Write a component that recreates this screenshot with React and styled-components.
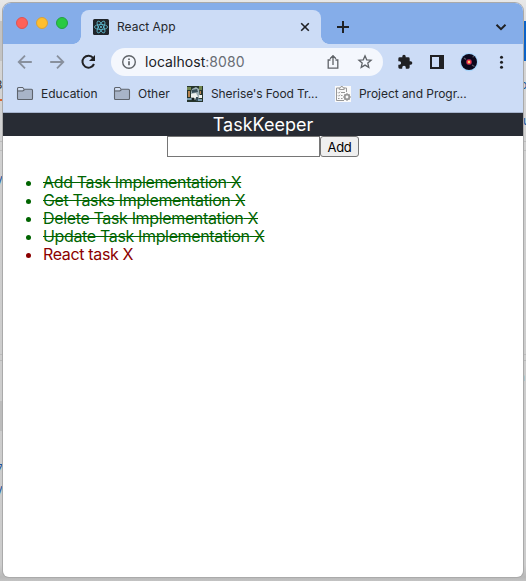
import React from "react";
import styled, { createGlobalStyle } from "styled-components";

const GlobalStyle = createGlobalStyle`
  * { box-sizing: border-box; }
  body { margin: 0; overflow: hidden; font-family: Inter, "Liberation Sans", sans-serif; }
`;

const Desktop = styled.main`
  position: relative;
  width: 526px;
  height: 581px;
  padding: 3px 3px 4px;
  overflow: hidden;
  background:
    linear-gradient(#bcbcbc, #bcbcbc) 0 354px / 100% 1px no-repeat,
    linear-gradient(#b8b8b8, #b8b8b8) 0 360px / 100% 1px no-repeat,
    linear-gradient(#bdbdbd, #bdbdbd) 0 141px / 100% 1px no-repeat,
    linear-gradient(#bdbdbd, #bdbdbd) 0 150px / 100% 1px no-repeat,
    linear-gradient(#d9632f, #d9632f) 0 99px / 3px 2px no-repeat,
    linear-gradient(#0b62c7, #0b62c7) 523px 21px / 3px 40px no-repeat,
    linear-gradient(#bcbcbc, #bcbcbc) 0 401px / 3px 30px no-repeat,
    linear-gradient(#c3c3c3, #c3c3c3) 0 21px / 3px 40px no-repeat,
    linear-gradient(#e8e8e8 0, #dedede 20px, #d5d5d5 62px, #cecece 200px, #cccccc 565px, #b9b9b9 577px, #c3c3c3);
`;

const Fragment = styled.span`
  position: absolute;
  left: ${(p) => p.$x}px;
  top: ${(p) => p.$y}px;
  color: ${(p) => p.$color || "#1859a0"};
  font-size: 12px;
  line-height: 14px;
`;

const Window = styled.section`
  position: relative;
  display: flex;
  flex-direction: column;
  height: 574px;
  overflow: hidden;
  border-radius: 8px 8px 6px 6px;
  background: #fff;
  box-shadow: 0 0 0 1px #aaa;
`;

const TabStrip = styled.header`
  display: flex;
  height: 41px;
  flex: none;
  background: #85ade9;
`;

const Lights = styled.div`
  display: flex;
  gap: 8px;
  width: 78px;
  padding: 14px 0 0 13px;
`;

const Light = styled.i`
  width: 12px;
  height: 12px;
  border-radius: 50%;
  background: ${(p) => p.$color};
  border: 1px solid ${(p) => p.$edge};
`;

const Tab = styled.div`
  position: relative;
  display: flex;
  align-items: center;
  width: 240px;
  height: 34px;
  margin-top: 7px;
  padding: 0 11px 0 12px;
  border-radius: 8px 8px 0 0;
  background: #ccdcf6;
  &::before, &::after {
    content: "";
    position: absolute;
    bottom: 0;
    width: 8px;
    height: 8px;
  }
  &::before { left: -8px; background: radial-gradient(circle at 0 0, transparent 7.5px, #ccdcf6 8px); }
  &::after { right: -8px; background: radial-gradient(circle at 100% 0, transparent 7.5px, #ccdcf6 8px); }
`;

const Label = styled.span`
  color: #25282d;
  font-size: 12px;
  line-height: 16px;
  white-space: nowrap;
  letter-spacing: ${(p) => p.$spacing || 0}px;
`;

const TabTitle = styled(Label)`
  flex: 1;
  margin-left: 8px;
`;

const Icon = styled.svg`
  display: block;
  flex: none;
  overflow: visible;
  fill: none;
  stroke: ${(p) => p.$color || "#202124"};
  stroke-width: ${(p) => p.$weight || 2};
`;

const StripActions = styled.div`
  display: flex;
  flex: 1;
  align-items: center;
  justify-content: space-between;
  padding: 7px 14px 0 14px;
`;

const Toolbar = styled.nav`
  display: flex;
  align-items: center;
  height: 36px;
  flex: none;
  padding: 0 12px 0 13px;
  background: #ccdcf6;
`;

const NavButtons = styled.div`
  display: flex;
  flex: none;
  gap: 15px;
  width: 95px;
`;

const Address = styled.div`
  display: flex;
  flex: none;
  align-items: center;
  width: 272px;
  height: 28px;
  padding: 0 10px;
  border-radius: 14px;
  background: #f4f7fd;
`;

const Url = styled.span`
  flex: 1;
  margin-left: 8px;
  color: #202124;
  font-size: 14px;
  line-height: 18px;
  letter-spacing: 0.05px;
`;

const Port = styled.span`
  color: #686d74;
`;

const AddressActions = styled.div`
  display: flex;
  gap: 16px;
`;

const Extensions = styled.div`
  display: flex;
  flex: none;
  align-items: center;
  gap: 16px;
  margin-left: 14px;
`;

const Bookmarks = styled.nav`
  display: flex;
  height: 33px;
  flex: none;
  padding: 6px 14px 0;
  border-bottom: 1px solid #a6b4cd;
  background: #ccdcf6;
`;

const Bookmark = styled.div`
  display: flex;
  align-items: flex-start;
  gap: 8px;
  width: ${(p) => p.$width}px;
`;

const AppHeader = styled.header`
  height: 23px;
  flex: none;
  color: #fff;
  background: #282c34;
  font-size: 18px;
  line-height: 24px;
  text-align: center;
`;

const TaskForm = styled.form`
  display: flex;
  justify-content: center;
  height: 21px;
  flex: none;
`;

const TaskInput = styled.input`
  width: 153px;
  height: 21px;
  margin: 0;
  padding: 1px 2px;
  border: 1px solid #767676;
  border-radius: 0;
  outline: none;
`;

const AddButton = styled.button`
  width: 39px;
  height: 21px;
  margin: 0;
  padding: 0;
  border: 1px solid #767676;
  border-radius: 3px;
  color: #000;
  background: #efefef;
  font: 13px/18px Inter, "Liberation Sans", sans-serif;
  letter-spacing: -0.3px;
`;

const TaskList = styled.ul`
  margin: 16px 0 0;
  padding: 0 0 0 40px;
`;

const Task = styled.li`
  height: 18px;
  color: ${(p) => (p.$done ? "#006400" : "#8b0000")};
  font-size: 16px;
  line-height: 18px;
  letter-spacing: -0.35px;
  text-decoration: ${(p) => (p.$done ? "line-through" : "none")};
`;

const ReactIcon = () => (
  <Icon width="16" height="16" viewBox="0 0 16 16" $color="#61bfd5" $weight={0.8}>
    <rect width="16" height="16" rx="1.5" fill="#20252a" stroke="none" />
    <ellipse cx="8" cy="8" rx="6.6" ry="2.5" />
    <ellipse cx="8" cy="8" rx="6.6" ry="2.5" transform="rotate(60 8 8)" />
    <ellipse cx="8" cy="8" rx="6.6" ry="2.5" transform="rotate(120 8 8)" />
    <circle cx="8" cy="8" r="1.1" fill="#61bfd5" stroke="none" />
  </Icon>
);

const FolderIcon = () => (
  <Icon width="16" height="15" viewBox="0 0 16 15" $color="#5e646d" $weight={1.1}>
    <path d="M.5 2.6c0-.7.4-1.1 1.1-1.1h4l1.5 1.8h7.3c.7 0 1.1.4 1.1 1.1v8.1c0 .6-.4 1-1 1h-13c-.6 0-1-.4-1-1z" fill="#a8b4c8" />
    <path d="M1.1 4.3h4.5l1-.8-1.1-1.4h-4z" fill="#d3dff3" stroke="none" />
    <path d="M.8 5h5l1.6-1.3" />
  </Icon>
);

const TruckIcon = () => (
  <Icon width="16" height="16" viewBox="0 0 16 16">
    <g stroke="none">
      <path fill="#26352c" d="M0 0h16v16H0z" />
      <path fill="#71864f" d="M0 1h4v3H0zM12 0h3v4h-3z" />
      <path fill="#b78350" d="M1 5h2v6H1zM13 5h1v3h-1z" />
      <path fill="#9eb1b6" d="M5 3l4-2 3 2 1 9-6 2-3-3V6z" />
      <path fill="#edf1ee" d="M4 8l5-1 2 4-5 2-2-2zM12 9h3v3h-3z" />
      <path fill="#38505a" d="M5 4l5-1 1 3-6 1zM9 11h2v4H9z" />
      <path fill="#799bae" d="M0 12h5v2H0zM11 13h4v2h-4z" />
      <circle cx="6" cy="13" r="1.5" fill="#17201f" />
    </g>
  </Icon>
);

const ClipboardIcon = () => (
  <Icon width="16" height="16" viewBox="0 0 16 16" $color="#989898" $weight={1}>
    <path d="M0 0h16v16H0z" fill="#fafafa" stroke="none" />
    <path d="M4 2H1.5v12.5H9M9 2h2.5v4M4.3 3.5V1.8h1.2L6 .5h1.5L8 1.8h1.2v1.7z" />
    <path d="M3 6.5l.7.7L5 5.7M6 6.5h4M3 9.5l.7.7L5 8.7M6 9.5h1.5M3 12.5h1.5M6 12.5h1.5" />
    <circle cx="12" cy="11" r="2.3" strokeWidth="1.8" />
    <path d="M12 7.3v1.4M12 13.3v1.4M8.3 11h1.4M14.3 11h1.4M9.4 8.4l1 1M13.6 12.6l1 1M14.6 8.4l-1 1M10.4 12.6l-1 1" strokeWidth="1.4" />
  </Icon>
);

const tasks = [
  ["Add Task Implementation", true],
  ["Get Tasks Implementation", true],
  ["Delete Task Implementation", true],
  ["Update Task Implementation", true],
  ["React task", false],
];

function BrowserTabs() {
  return (
    <TabStrip>
      <Lights>
        <Light $color="#ff6159" $edge="#db5555" />
        <Light $color="#ffbe2e" $edge="#d7a13b" />
        <Light $color="#29ca41" $edge="#259f43" />
      </Lights>
      <Tab>
        <ReactIcon />
        <TabTitle>React App</TabTitle>
        <Icon width="10" height="10" viewBox="0 0 10 10" $weight={1.6}>
          <path d="M1.2 1.2l7.6 7.6M8.8 1.2L1.2 8.8" />
        </Icon>
      </Tab>
      <StripActions>
        <Icon width="14" height="14" viewBox="0 0 14 14" $weight={2}>
          <path d="M8 1v12M2 7h12" />
        </Icon>
        <Icon width="16" height="12" viewBox="0 0 16 12" $weight={2}>
          <path d="M3.5 3.7L8 8.2l4.5-4.5" />
        </Icon>
      </StripActions>
    </TabStrip>
  );
}

function BrowserToolbar() {
  return (
    <Toolbar>
      <NavButtons>
        <Icon width="18" height="18" viewBox="0 0 18 18" $color="#88909d" $weight={1.8}>
          <path d="M15.8 9H3M9 2.7L2.7 9 9 15.3" />
        </Icon>
        <Icon width="16" height="18" viewBox="0 0 16 18" $color="#88909d" $weight={1.8}>
          <path d="M1.2 9H14M8 2.7L14.3 9 8 15.3" />
        </Icon>
        <Icon width="16" height="18" viewBox="0 0 16 18" $weight={2}>
          <path d="M13.2 5A6 6 0 1 0 14 11" />
          <path d="M15 2v6H9z" fill="#202124" stroke="none" />
        </Icon>
      </NavButtons>
      <Address>
        <Icon width="16" height="16" viewBox="0 0 16 16" $color="#5f6368" $weight={1.4}>
          <circle cx="8" cy="8" r="6.3" />
          <path d="M8 7.2v4M8 4.5v1.6" strokeWidth="1.7" />
        </Icon>
        <Url>localhost<Port>:8080</Port></Url>
        <AddressActions>
          <Icon width="16" height="16" viewBox="0 0 16 16" $color="#5f6368" $weight={1.3}>
            <path d="M5.5 6H3.2v8.2h9.6V6h-2.3M8 11V2M5 4.7l3-3 3 3" />
          </Icon>
          <Icon width="16" height="16" viewBox="0 0 16 16" $color="#5f6368" $weight={1.3}>
            <path d="M8 1.8l1.7 4 4.4.4-3.3 2.9 1 4.3L8 11.1l-3.8 2.3 1-4.3-3.3-2.9 4.4-.4z" />
          </Icon>
        </AddressActions>
      </Address>
      <Extensions>
        <Icon width="16" height="16" viewBox="0 0 24 24">
          <path fill="#202124" stroke="none" d="M20.5 11H19V7a2 2 0 0 0-2-2h-4V3.5a2.5 2.5 0 0 0-5 0V5H4a2 2 0 0 0-2 2v3.8h1.5a2.7 2.7 0 0 1 0 5.4H2V20a2 2 0 0 0 2 2h3.8v-1.5a2.7 2.7 0 0 1 5.4 0V22H17a2 2 0 0 0 2-2v-4h1.5a2.5 2.5 0 0 0 0-5z" />
        </Icon>
        <Icon width="16" height="16" viewBox="0 0 16 16">
          <path d="M1 1h14v14H1z" fill="#202124" stroke="none" />
          <path d="M3 3h7v10H3z" fill="#ccdcf6" stroke="none" />
        </Icon>
        <Icon width="16" height="16" viewBox="0 0 16 16">
          <circle cx="8" cy="8" r="9.2" fill="#a9d6fc" stroke="none" />
          <circle cx="8" cy="8" r="8" fill="#0b071c" stroke="none" />
          <path d="M3 4l2 1.5M11 11l2.5 1.5M11.5 3l1.5-.5" stroke="#5b5661" strokeWidth="1.2" />
          <circle cx="8" cy="8" r="3" fill="#852451" stroke="none" />
          <circle cx="8" cy="8" r="2.3" fill="#f23847" stroke="none" />
          <circle cx="8" cy="8" r="1.2" fill="#ffca73" stroke="none" />
        </Icon>
        <Icon width="16" height="16" viewBox="0 0 16 16">
          <g fill="#202124" stroke="none"><circle cx="8.5" cy="3.3" r="1.5" /><circle cx="8.5" cy="8.3" r="1.5" /><circle cx="8.5" cy="13.3" r="1.5" /></g>
        </Icon>
      </Extensions>
    </Toolbar>
  );
}

export default function App() {
  return (
    <>
      <GlobalStyle />
      <Desktop>
        <Fragment $x={-5} $y={78} $color="#333">3</Fragment>
        <Fragment $x={-4} $y={172}>y</Fragment>
        <Fragment $x={-4} $y={462}>7</Fragment>
        <Fragment $x={-4} $y={482}>y</Fragment>
        <Fragment $x={520} $y={78}>o</Fragment>
        <Fragment $x={523} $y={114}>u</Fragment>
        <Fragment $x={518} $y={370}>a</Fragment>
        <Window>
          <BrowserTabs />
          <BrowserToolbar />
          <Bookmarks>
            <Bookmark $width={97}><FolderIcon /><Label>Education</Label></Bookmark>
            <Bookmark $width={73}><FolderIcon /><Label>Other</Label></Bookmark>
            <Bookmark $width={148}><TruckIcon /><Label $spacing={-0.1}>Sherise's Food Tr...</Label></Bookmark>
            <Bookmark $width={150}><ClipboardIcon /><Label $spacing={-0.04}>Project and Progr...</Label></Bookmark>
          </Bookmarks>
          <AppHeader>TaskKeeper</AppHeader>
          <TaskForm onSubmit={(event) => event.preventDefault()}>
            <TaskInput aria-label="New task" />
            <AddButton type="submit">Add</AddButton>
          </TaskForm>
          <TaskList>
            {tasks.map(([name, done]) => <Task key={name} $done={done}>{name} X</Task>)}
          </TaskList>
        </Window>
      </Desktop>
    </>
  );
}
